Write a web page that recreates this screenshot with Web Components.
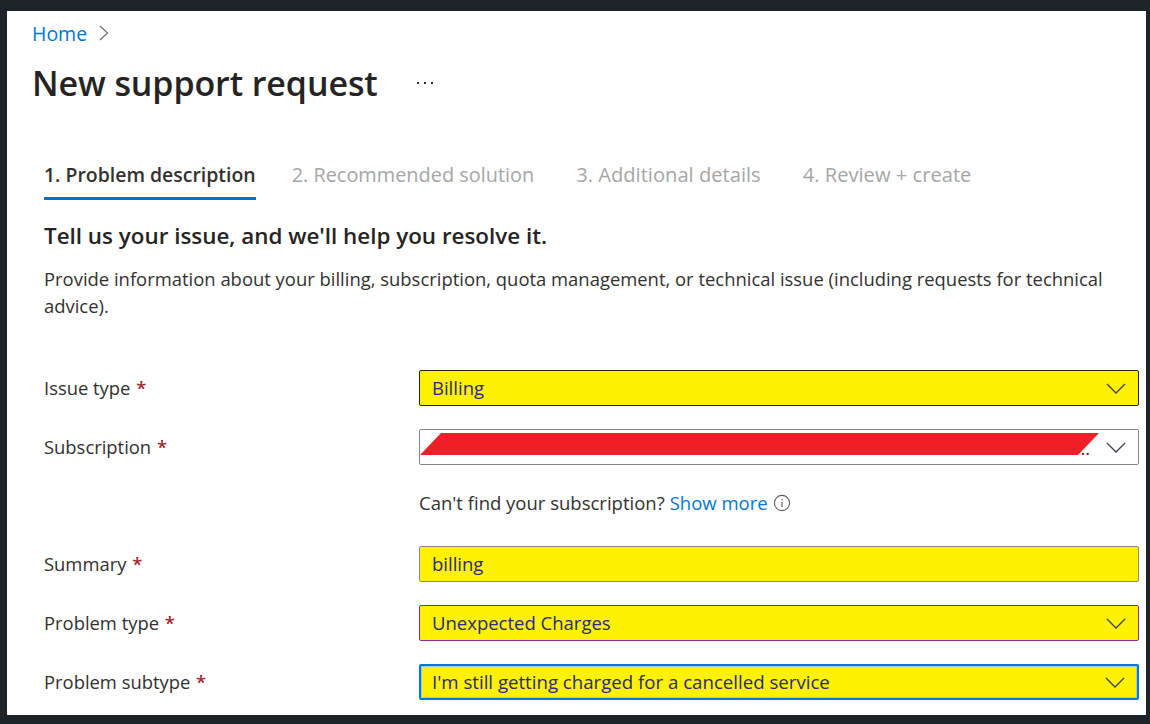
<!DOCTYPE html>
<html lang="en">
<head>
<meta charset="utf-8">
<title>New support request</title>
<style>
  html, body { margin: 0; height: 100%; background: #1e2327; overflow: hidden; }
  body { font-family: "Open Sans", "Noto Sans", sans-serif; color: #323130; }
</style>
</head>
<body>
<support-page>
  <page-header title-text="New support request"></page-header>
  <step-tabs></step-tabs>
  <h-intro></h-intro>
  <form-row label="Issue type"><select-box value="Billing" fill arrow border="#201f1e"></select-box></form-row>
  <form-row label="Subscription"><select-box arrow redacted border="#8a8886"></select-box></form-row>
  <sub-hint></sub-hint>
  <form-row label="Summary"><select-box value="billing" fill border="#8a8886"></select-box></form-row>
  <form-row label="Problem type"><select-box value="Unexpected Charges" fill arrow border="#8e24aa"></select-box></form-row>
  <form-row label="Problem subtype"><select-box value="I'm still getting charged for a cancelled service" fill arrow focus border="#0078d4"></select-box></form-row>
</support-page>

<script>
class SupportPage extends HTMLElement {
  constructor() {
    super();
    this.attachShadow({ mode: "open" });
    this.shadowRoot.innerHTML = `
      <style>
        :host {
          display: block;
          box-sizing: border-box;
          margin: 11px 4px 0 7px;
          height: 704px;
          background: #fff;
          overflow: hidden;
          font-size: 18px;
        }
      </style>
      <slot></slot>
    `;
  }
}

class PageHeader extends HTMLElement {
  constructor() {
    super();
    this.attachShadow({ mode: "open" });
    this.shadowRoot.innerHTML = `
      <style>
        :host { display: block; padding: 9px 0 0 25px; }
        .crumb { display: flex; align-items: center; gap: 12px; height: 26px; }
        a { color: #0078d4; font-size: 19.5px; text-decoration: none; }
        .title { display: flex; align-items: center; height: 46px; margin-top: 14px; }
        h1 { margin: 0; font-size: 34px; font-weight: 600; color: #252423; letter-spacing: -0.1px; line-height: 46px; }
        .more { margin-left: 38px; display: block; }
      </style>
      <div class="crumb">
        <a href="#">Home</a>
        <svg width="10" height="16" viewBox="0 0 10 16"><path d="M1 1l7.5 7L1 15" fill="none" stroke="#6b6a69" stroke-width="1.1"/></svg>
      </div>
      <div class="title">
        <h1></h1>
        <svg class="more" width="18" height="4" viewBox="0 0 18 4"><g fill="#323130"><rect x="1" y="1" width="2" height="2"/><rect x="8" y="1" width="2" height="2"/><rect x="15" y="1" width="2" height="2"/></g></svg>
      </div>
    `;
    this.shadowRoot.querySelector("h1").textContent = this.getAttribute("title-text");
  }
}

class StepTabs extends HTMLElement {
  constructor() {
    super();
    this.attachShadow({ mode: "open" });
    this.shadowRoot.innerHTML = `
      <style>
        :host { display: flex; gap: 42px; margin: 48px 0 0 37px; height: 46px; font-size: 19.9px; color: #a6a6a6; }
        div { box-sizing: border-box; height: 46px; line-height: 42px; white-space: nowrap; }
        .on { color: #323130; font-size: 19.45px; font-weight: 600; border-bottom: 3px solid #0072c6; margin-right: -6px; }
        .wide { font-size: 20.15px; line-height: 40px; }
      </style>
      <div class="on">1. Problem description</div>
      <div>2. Recommended solution</div>
      <div class="wide">3. Additional details</div>
      <div class="wide">4. Review + create</div>
    `;
  }
}

class HIntro extends HTMLElement {
  constructor() {
    super();
    this.attachShadow({ mode: "open" });
    this.shadowRoot.innerHTML = `
      <style>
        :host { display: block; padding: 0 30px 0 37px; height: 170px; }
        h2 { margin: 0; padding-top: 21px; font-size: 22.4px; font-weight: 600; line-height: 30px; color: #252423; }
        p { margin: 14px 0 0; font-size: 18.43px; line-height: 27px; color: #323130; }
      </style>
      <h2>Tell us your issue, and we'll help you resolve it.</h2>
      <p>Provide information about your billing, subscription, quota management, or technical issue (including requests for technical advice).</p>
    `;
  }
}

class FormRow extends HTMLElement {
  constructor() {
    super();
    this.attachShadow({ mode: "open" });
    this.shadowRoot.innerHTML = `
      <style>
        :host { display: grid; grid-template-columns: 375px 720px; align-items: center; margin: 0 0 23px 37px; height: 36px; }
        label { font-size: 18.4px; color: #323130; padding-bottom: 2px; }
        i { font-style: normal; color: #a4262c; font-weight: 600; margin-left: 1px; }
      </style>
      <label><span></span> <i>*</i></label>
      <slot></slot>
    `;
    this.shadowRoot.querySelector("span").textContent = this.getAttribute("label");
  }
}

class SelectBox extends HTMLElement {
  constructor() {
    super();
    this.attachShadow({ mode: "open" });
    const fill = this.hasAttribute("fill");
    const focus = this.hasAttribute("focus");
    const border = this.getAttribute("border");
    const arrow = this.hasAttribute("arrow")
      ? `<svg class="arrow" width="20" height="11" viewBox="0 0 20 11"><path d="M1 1l9 9 9-9" fill="none" stroke="#3f3f55" stroke-width="1.3"/></svg>`
      : "";
    const redacted = this.hasAttribute("redacted")
      ? `<span class="dots">..</span><svg class="red" width="680" height="24" viewBox="0 0 680 24"><polygon points="0,23 21,1 679,1 658,23" fill="#ef1f28"/></svg>`
      : "";
    this.shadowRoot.innerHTML = `
      <style>
        :host {
          display: flex;
          position: relative;
          box-sizing: border-box;
          align-items: center;
          justify-content: space-between;
          height: 36px;
          padding: 0 12px 0 ${focus ? 11 : 12}px;
          border: ${focus ? 2 : 1}px solid ${border};
          border-radius: 2px;
          background: ${fill ? "#fff200" : "#fff"};
          ${focus ? "box-shadow: inset 0 0 0 1px #9ec7e8;" : ""}
        }
        .value { font-size: ${focus ? 18.65 : 18.5}px; color: #2a2a80; white-space: nowrap; padding-bottom: 2px; }
        .arrow { display: block; margin-left: auto; }
        .red { position: absolute; left: 0; top: 2px; }
        .dots { position: absolute; right: 48px; top: 6px; font-size: 18px; color: #323130; }
      </style>
      <span class="value"></span>${redacted}${arrow}
    `;
    this.shadowRoot.querySelector(".value").textContent = this.getAttribute("value") || "";
  }
}

class SubHint extends HTMLElement {
  constructor() {
    super();
    this.attachShadow({ mode: "open" });
    this.shadowRoot.innerHTML = `
      <style>
        :host { display: flex; box-sizing: border-box; align-items: center; gap: 5px; margin: 25px 0 30px 412px; height: 26px; padding-bottom: 2px; font-size: 18.5px; color: #323130; white-space: nowrap; }
        a { color: #0078d4; text-decoration: none; }
        svg { display: block; margin-top: 2px; }
      </style>
      <span>Can't find your subscription?</span>
      <a href="#">Show more</a>
      <svg width="18" height="18" viewBox="0 0 18 18"><circle cx="9" cy="9" r="7.6" fill="none" stroke="#5f5e5d" stroke-width="1.1"/><rect x="8.4" y="7.8" width="1.2" height="5.4" fill="#5f5e5d"/><rect x="8.4" y="5" width="1.2" height="1.4" fill="#5f5e5d"/></svg>
    `;
  }
}

customElements.define("support-page", SupportPage);
customElements.define("page-header", PageHeader);
customElements.define("step-tabs", StepTabs);
customElements.define("h-intro", HIntro);
customElements.define("form-row", FormRow);
customElements.define("select-box", SelectBox);
customElements.define("sub-hint", SubHint);
</script>
</body>
</html>
